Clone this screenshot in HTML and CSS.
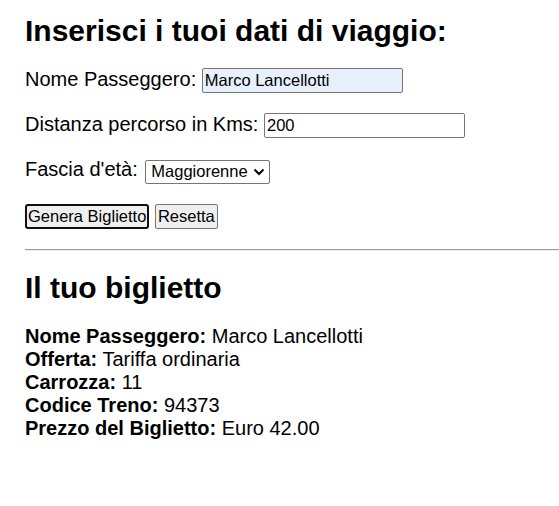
FILE: index.html
```html
<!DOCTYPE html>
<html lang="it">
<head>
<meta charset="utf-8">
<title>Biglietto</title>
<link rel="stylesheet" href="styles.css">
</head>
<body>
<main class="page">
  <h2 class="title">Inserisci i tuoi dati di viaggio:</h2>
  <form class="form">
    <p class="row"><label>Nome Passeggero: <input class="field autofill" type="text" value="Marco Lancellotti"></label></p>
    <p class="row"><label>Distanza percorso in Kms: <input class="field" type="text" value="200"></label></p>
    <p class="row"><label>Fascia d'età: <span class="select">Maggiorenne <svg class="chev" width="12" height="8" viewBox="0 0 12 8"><path d="M1.5 1.5 L6 6 L10.5 1.5" fill="none" stroke="#000" stroke-width="2"/></svg></span></label></p>
    <p class="row buttons"><button type="button" class="btn btn-focus">Genera Biglietto</button> <button type="button" class="btn">Resetta</button></p>
  </form>
  <hr class="divider">
  <h2 class="title">Il tuo biglietto</h2>
  <div class="ticket">
    <div><b>Nome Passeggero:</b> Marco Lancellotti</div>
    <div><b>Offerta:</b> Tariffa ordinaria</div>
    <div><b>Carrozza:</b> 11</div>
    <div><b>Codice Treno:</b> 94373</div>
    <div><b>Prezzo del Biglietto:</b> Euro 42.00</div>
  </div>
</main>
</body>
</html>
```

FILE: styles.css
```css
html, body {
  margin: 0;
  padding: 0;
  background: #fff;
}
body {
  font-family: "Liberation Sans", Arial, sans-serif;
  font-size: 20px;
  color: #000;
}
.page {
  padding: 14px 0 0 25px;
}
.title {
  font-size: 30px;
  font-weight: bold;
  margin: 0 0 20px 0;
  line-height: 34px;
}
.form {
  margin: 0;
}
.row {
  margin: 0 0 20px 0;
  line-height: 23px;
}
.field {
  font-family: "Liberation Sans", Arial, sans-serif;
  font-size: 16.5px;
  width: 201px;
  height: 25px;
  box-sizing: border-box;
  border: 1px solid #767676;
  border-radius: 2px;
  padding: 0 2px;
  vertical-align: 0;
  color: #000;
}
.autofill {
  background: #e8f0fe;
}
.select {
  display: inline-flex;
  align-items: center;
  gap: 5px;
  box-sizing: border-box;
  height: 24px;
  margin-left: 2px;
  padding: 0 4px 0 5px;
  border: 1px solid #767676;
  border-radius: 2px;
  font-size: 16.5px;
  vertical-align: -1px;
}
.chev {
  display: block;
}
.buttons {
  margin-bottom: 20px;
}
.btn {
  font-family: "Liberation Sans", Arial, sans-serif;
  font-size: 16.5px;
  height: 25px;
  padding: 0 2px;
  background: #efefef;
  border: 1px solid #767676;
  border-radius: 2px;
  color: #000;
}
.btn-focus {
  border: 2px solid #101010;
  border-radius: 3px;
  padding: 0 1px;
}
.divider {
  margin: 0 0 20px 0;
  border: 0;
  border-top: 1px solid #9a9a9a;
  border-bottom: 1px solid #eee;
  height: 0;
}
.ticket {
  line-height: 23px;
}
```
